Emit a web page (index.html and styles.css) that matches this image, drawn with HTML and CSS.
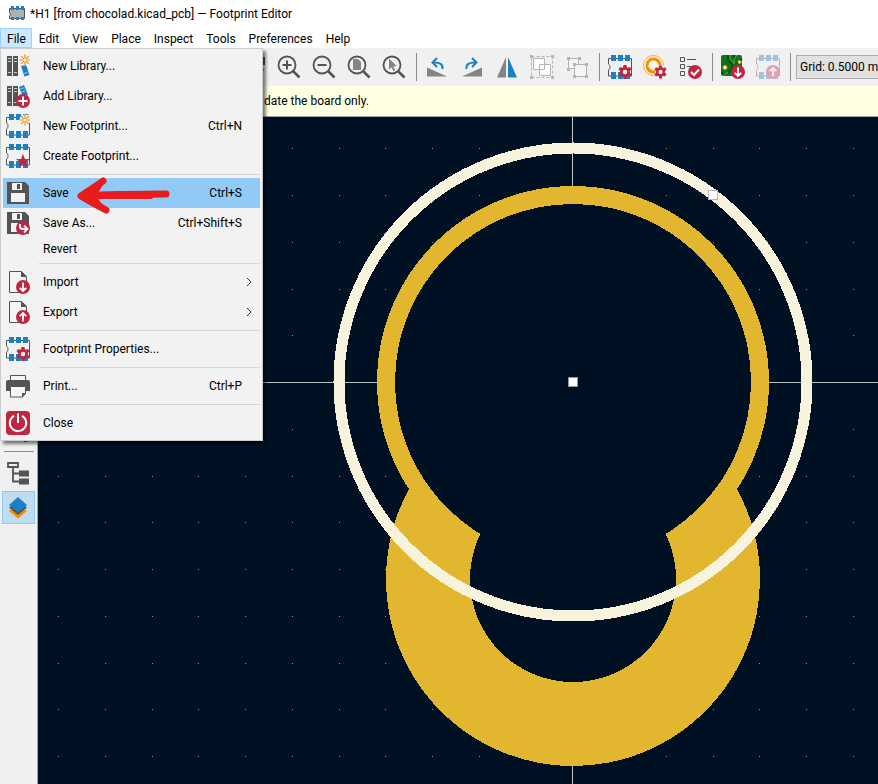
FILE: index.html
```html
<!DOCTYPE html>
<html lang="en">
<head>
<meta charset="utf-8">
<title>Footprint Editor</title>
<link rel="stylesheet" href="styles.css">
</head>
<body>
<svg class="defs" aria-hidden="true">
  <defs>
    <symbol id="footprint" viewBox="0 0 24 24">
      <path d="M.5 3.500H23.500V21H.5V15C2.500 14.500 2.500 10 .5 9Z" fill="none" stroke="#545454"/>
      <path d="M3 0h5v6H3zM10 0h5v6h-5zM17 0h5v6h-5zM3 17h5v7H3zM10 17h5v7h-5zM17 17h5v7h-5z" fill="#1a81c4"/>
    </symbol>
    <symbol id="gear" viewBox="0 0 14 14">
      <path d="M5.500 0h3l.4 2.200 1 .5 2.100-.8 1.500 2.600-1.700 1.400v1.800l1.700 1.500-1.500 2.600-2.100-.8-1 .6-.4 2.400h-3l-.4-2.400-1-.6-2.100.8L.5 9.200l1.700-1.500V5.900L.5 4.500 2 1.900l2.100.8 1-.5z" fill="#bf2641"/>
      <circle cx="7" cy="7" r="2.300" fill="#f0f0f0"/>
    </symbol>
    <symbol id="spark" viewBox="0 0 12 12">
      <circle cx="6" cy="6" r="5.500" fill="#f2f2f2"/>
      <path d="M6 .5v11M.5 6h11M2.200 2.200l7.600 7.600M9.800 2.200L2.200 9.800" stroke="#f29100" stroke-width="1.200"/>
      <circle cx="6" cy="6" r="1.500" fill="#fff"/>
    </symbol>
    <symbol id="books" viewBox="0 0 24 24">
      <path d="M1 2h5v20H1zM7 2h5v20H7z" fill="#545454"/>
      <path d="M2 4.500h3M2 7.500h3M2 18.500h3M8 4.500h3M8 7.500h3M8 18.500h3" stroke="#c9c9c9"/>
    </symbol>
    <symbol id="badge-down" viewBox="0 0 14 14">
      <circle cx="7" cy="7" r="7" fill="#bf2641"/>
      <path d="M7 2.500v8.500M3.700 7.800L7 11l3.300-3.200" fill="none" stroke="#fff" stroke-width="1.800"/>
    </symbol>
    <symbol id="badge-up" viewBox="0 0 14 14">
      <circle cx="7" cy="7" r="7" fill="#bf2641"/>
      <path d="M7 11.500V3M3.700 6.200L7 3l3.300 3.200" fill="none" stroke="#fff" stroke-width="1.800"/>
    </symbol>
    <symbol id="floppy" viewBox="0 0 24 24">
      <path d="M1 1h18l4 4v18H1z" fill="#545454"/>
      <path d="M6 2h10v7H6zM5 12h14v9H5z" fill="#f2f2f2"/>
      <path d="M11 3h3v5h-3z" fill="#545454"/>
    </symbol>
    <symbol id="page" viewBox="0 0 24 24">
      <path d="M3.500 1.500h12l5 5v16h-17z" fill="#f5f5f5" stroke="#545454"/>
      <path d="M15 1l6 6h-6z" fill="#545454"/>
    </symbol>
    <symbol id="lens" viewBox="0 0 24 24">
      <circle cx="10" cy="10" r="8.500" fill="none" stroke="#545454" stroke-width="1.800"/>
      <path d="M16 16l6.500 6.500" stroke="#545454" stroke-width="2.500"/>
    </symbol>
  </defs>
</svg>

<div class="app">
  <header class="titlebar">
    <svg class="app-icon" viewBox="0 0 16 16" aria-hidden="true">
      <path d="M.5 2.500h15v10H.5V10c1-.5 1-3 0-3.500z" fill="#a9b1b7" stroke="#545454"/>
      <path d="M2 0h3v4H2zM7 0h3v4H7zM12 0h3v4h-3zM2 11h3v3H2zM7 11h3v3H7zM12 11h3v3h-3z" fill="#1a81c4"/>
    </svg>
    <h1 class="title">*H1 [from chocolad.kicad_pcb] — Footprint Editor</h1>
  </header>

  <nav class="menubar">
    <button class="menubar-item open">File</button>
    <button class="menubar-item">Edit</button>
    <button class="menubar-item">View</button>
    <button class="menubar-item">Place</button>
    <button class="menubar-item">Inspect</button>
    <button class="menubar-item">Tools</button>
    <button class="menubar-item">Preferences</button>
    <button class="menubar-item">Help</button>

    <div class="menu" role="menu">
      <button class="item" role="menuitem">
        <svg class="icon" viewBox="0 0 24 24"><use href="#books"/><path d="M15 12l5-1.500 3.500 10.500-5 1.500z" fill="#1a81c4"/><path d="M18 19.500l3.500-1" stroke="#9cc9e8"/><use href="#spark" x="13" y="0" width="12" height="12"/></svg>
        <span class="label">New Library...</span>
      </button>
      <button class="item" role="menuitem">
        <svg class="icon" viewBox="0 0 24 24"><use href="#books"/><path d="M13 3l5-2 4 10-5 2z" fill="#1a81c4"/><path d="M14.500 5l3.500-1.200M15.500 8l3.500-1.200" stroke="#9cc9e8"/><circle cx="17" cy="17" r="7" fill="#bf2641"/><path d="M17 12.500v9M12.500 17h9" stroke="#fff" stroke-width="2"/></svg>
        <span class="label">Add Library...</span>
      </button>
      <button class="item" role="menuitem">
        <svg class="icon" viewBox="0 0 24 24"><use href="#footprint"/><use href="#spark" x="13" y="0" width="12" height="12"/></svg>
        <span class="label">New Footprint...</span><kbd class="keys">Ctrl+N</kbd>
      </button>
      <button class="item" role="menuitem">
        <svg class="icon" viewBox="0 0 24 24"><use href="#footprint"/><path d="M17 10l1.900 5H24l-4.100 3.200 1.500 5.300L17 20.400l-4.400 3.100 1.500-5.300L10 15h5.100z" fill="#bf2641"/></svg>
        <span class="label">Create Footprint...</span>
      </button>
      <hr class="rule">
      <button class="item selected" role="menuitem">
        <svg class="icon"><use href="#floppy"/></svg>
        <span class="label">Save</span><kbd class="keys">Ctrl+S</kbd>
      </button>
      <button class="item" role="menuitem">
        <svg class="icon" viewBox="0 0 24 24"><use href="#floppy"/><circle cx="17" cy="17" r="7" fill="#bf2641"/><path d="M14 13v2.500q0 2.500 3 2.500h4M18 14.500l3.500 3.500-3.500 3.500" fill="none" stroke="#fff" stroke-width="1.800"/></svg>
        <span class="label">Save As...</span><kbd class="keys">Ctrl+Shift+S</kbd>
      </button>
      <button class="item plain" role="menuitem"><span class="icon"></span><span class="label">Revert</span></button>
      <hr class="rule">
      <button class="item" role="menuitem">
        <svg class="icon" viewBox="0 0 24 24"><use href="#page"/><use href="#badge-down" x="10" y="10" width="14" height="14"/></svg>
        <span class="label">Import</span>
        <svg class="chevron" viewBox="0 0 6 10"><path d="M1 1l4 4-4 4" fill="none" stroke="#333"/></svg>
      </button>
      <button class="item" role="menuitem">
        <svg class="icon" viewBox="0 0 24 24"><use href="#page"/><use href="#badge-up" x="10" y="10" width="14" height="14"/></svg>
        <span class="label">Export</span>
        <svg class="chevron" viewBox="0 0 6 10"><path d="M1 1l4 4-4 4" fill="none" stroke="#333"/></svg>
      </button>
      <hr class="rule">
      <button class="item" role="menuitem">
        <svg class="icon" viewBox="0 0 24 24"><use href="#footprint"/><use href="#gear" x="10" y="10" width="14" height="14"/></svg>
        <span class="label">Footprint Properties...</span>
      </button>
      <hr class="rule">
      <button class="item" role="menuitem">
        <svg class="icon" viewBox="0 0 24 24"><path d="M4.500 6V1.500h15V6" fill="#f5f5f5" stroke="#545454"/><path d="M2 6h20q2 0 2 2v9h-4v-5H4v5H0V8q0-2 2-2z" fill="#545454"/><path d="M4.500 12.500h15v7l-3 3.500h-12z" fill="#f5f5f5" stroke="#545454"/><path d="M20 19h-4v4.500z" fill="#545454"/></svg>
        <span class="label">Print...</span><kbd class="keys">Ctrl+P</kbd>
      </button>
      <hr class="rule">
      <button class="item" role="menuitem">
        <svg class="icon" viewBox="0 0 24 24"><rect width="24" height="24" rx="4" fill="#bf2641"/><path d="M8 4.800a8.200 8.200 0 1 0 8 0M12 2.500V12" fill="none" stroke="#fff" stroke-width="2"/></svg>
        <span class="label">Close</span>
      </button>
      <svg class="pointer" viewBox="0 0 96 40" aria-hidden="true">
        <path d="M27 6Q17 13 5 21Q15 27 30 35M6 21Q30 19 50 19.500L90 19" fill="none" stroke="#e81c1c" stroke-width="7" stroke-linecap="round" stroke-linejoin="round"/>
        <path d="M4 21L28 8 22 18H50L80 18 76 24 50 24H22L30 34Z" fill="#e81c1c"/>
      </svg>
    </div>
  </nav>

  <div class="toolbar">
    <button class="tool" aria-label="Refresh"><svg class="icon" viewBox="0 0 24 24"><path d="M20 7A9 9 0 1 0 21 14M22 2v7h-7" fill="none" stroke="#545454" stroke-width="2"/></svg></button>
    <button class="tool" aria-label="Zoom in"><svg class="icon" viewBox="0 0 24 24"><use href="#lens"/><path d="M10 5.500v9M5.500 10h9" stroke="#545454" stroke-width="2"/></svg></button>
    <button class="tool" aria-label="Zoom out"><svg class="icon" viewBox="0 0 24 24"><use href="#lens"/><path d="M5.500 10h9" stroke="#545454" stroke-width="2"/></svg></button>
    <button class="tool" aria-label="Zoom to fit"><svg class="icon" viewBox="0 0 24 24"><use href="#lens"/><path d="M6 4h5l3 3v8H6z" fill="#848484"/></svg></button>
    <button class="tool" aria-label="Zoom to selection"><svg class="icon" viewBox="0 0 24 24"><use href="#lens"/><path d="M7 3.500v11l2.500-2.300 2 4 1.800-.9-1.900-3.900 3.300-.3z" fill="#848484"/></svg></button>
    <span class="divider"></span>
    <button class="tool" aria-label="Rotate left"><svg class="icon" viewBox="0 0 24 24"><path d="M2 12.500L22 21.500H2z" fill="#848484"/><path d="M17.500 14Q18.500 7 8 7.500" fill="none" stroke="#1a81c4" stroke-width="2"/><path d="M12 3L7.500 7.500 12 12" fill="none" stroke="#1a81c4" stroke-width="2"/></svg></button>
    <button class="tool" aria-label="Rotate right"><svg class="icon" viewBox="0 0 24 24"><path d="M22 12.500L2 21.500h20z" fill="#848484"/><path d="M6.500 14Q5.500 7 16 7.500" fill="none" stroke="#1a81c4" stroke-width="2"/><path d="M12 3l4.500 4.500L12 12" fill="none" stroke="#1a81c4" stroke-width="2"/></svg></button>
    <button class="tool" aria-label="Mirror"><svg class="icon" viewBox="0 0 24 24"><path d="M11 2v20.500H2z" fill="#848484"/><path d="M13 2v20.500h9z" fill="#1a81c4"/></svg></button>
    <button class="tool" aria-label="Group" disabled><svg class="icon" viewBox="0 0 24 24"><path d="M1.500 1.500h21v21h-21z" fill="none" stroke="#b4b4b4" stroke-dasharray="3 2"/><path d="M3.500 3.500h11v11h-11zM9.500 9.500h11v11h-11z" fill="#fff" stroke="#b4b4b4"/><path d="M0 0h3v3H0zM21 0h3v3h-3zM0 21h3v3H0zM21 21h3v3h-3z" fill="#b4b4b4"/></svg></button>
    <button class="tool" aria-label="Ungroup" disabled><svg class="icon" viewBox="0 0 24 24"><path d="M3.500 3.500h10v10h-10z" fill="#f5f5f5" stroke="#b4b4b4"/><path d="M9.500 9.500h12v12h-12z" fill="#f5f5f5" stroke="#b4b4b4"/><path d="M2 2h3v3H2zM13 2h3v3h-3zM2 13h3v3H2zM8 8h3v3H8zM20 8h3v3h-3zM8 20h3v3H8zM20 20h3v3h-3z" fill="#b4b4b4"/></svg></button>
    <span class="divider"></span>
    <button class="tool" aria-label="Footprint properties"><svg class="icon" viewBox="0 0 24 24"><use href="#footprint"/><use href="#gear" x="10" y="10" width="14" height="14"/></svg></button>
    <button class="tool" aria-label="Pad properties"><svg class="icon" viewBox="0 0 24 24"><circle cx="10.500" cy="10.500" r="10" fill="none" stroke="#f2a93b"/><circle cx="10.500" cy="10.500" r="6.500" fill="#f5f5f5" stroke="#f29100" stroke-width="3"/><path d="M12 24v-9l4-5h8v14z" fill="#f0f0f0"/><use href="#gear" x="11" y="10" width="13" height="14"/></svg></button>
    <button class="tool" aria-label="Check footprint"><svg class="icon" viewBox="0 0 24 24"><path d="M2.500 2.500h4v4h-4zM2.500 9.500h4v4h-4zM2.500 16.500h4v4h-4z" fill="none" stroke="#545454"/><path d="M9 4.500h9M9 11.500h5" stroke="#545454"/><circle cx="17" cy="17" r="7" fill="#bf2641"/><path d="M13 17l3 3 5-5.500" fill="none" stroke="#fff" stroke-width="2"/></svg></button>
    <span class="divider"></span>
    <button class="tool" aria-label="Load from board"><svg class="icon" viewBox="0 0 24 24"><rect y="0" width="21" height="21" rx="2" fill="#12721b"/><path d="M7 0v5l4 4v5l-4 4M13 0v5M21 4l-6 5M0 17l4 3" fill="none" stroke="#0a4a11" stroke-width="1.500"/><path d="M2 21l5-4M16 0l-3 4v5M9 0v4l4 4" stroke="#5db054" fill="none"/><circle cx="4" cy="12.500" r="2" fill="#fff" stroke="#f29100"/><circle cx="18.500" cy="7" r="1.500" fill="#fff" stroke="#f29100"/><use href="#badge-down" x="10" y="10" width="14" height="14"/></svg></button>
    <button class="tool faded" aria-label="Insert on board" disabled><svg class="icon" viewBox="0 0 24 24"><use href="#footprint"/><use href="#badge-up" x="10" y="10" width="14" height="14"/></svg></button>
    <span class="divider"></span>
    <select class="grid-select" aria-label="Grid"><option>Grid: 0.5000 mm</option></select>
  </div>

  <div class="infobar">date the board only.</div>

  <main class="workspace">
    <aside class="sidebar">
      <button class="side" aria-label="High contrast"><svg class="icon" viewBox="0 0 24 24"><path d="M3 3h12v12H3zM18 18h3v4h-3z" fill="#545454"/></svg></button>
      <hr class="side-rule">
      <button class="side" aria-label="Footprint tree"><svg class="icon" viewBox="0 0 24 24"><path d="M2 2h10v4H2zM7 7v13.500h7M7 12.500h7" fill="none" stroke="#545454" stroke-width="1.800"/><path d="M13 9.500h10v6H13zM13 17.500h10v6H13z" fill="#545454"/></svg></button>
      <button class="side active" aria-label="Layers"><svg class="icon" viewBox="0 0 24 24"><path d="M3 15l9 7.500 9-7.500-3-2H6z" fill="#f29100"/><path d="M3 11.500l9 7.500 9-7.500-3-2H6z" fill="#545454"/><path d="M12 1l9 8-9 7.500L3 9z" fill="#1a81c4"/></svg></button>
    </aside>
    <div class="canvas">
      <svg class="drawing" role="img" aria-label="Mounting hole footprint">
        <defs>
          <pattern id="dots" x="20" y="31" width="187" height="187" patternUnits="userSpaceOnUse">
            <path d="M0 0h1v1H0zM47 0h1v1h-1zM94 0h1v1h-1zM140 0h1v1h-1zM0 47h1v1H0zM47 47h1v1h-1zM94 47h1v1h-1zM140 47h1v1h-1zM0 94h1v1H0zM47 94h1v1h-1zM94 94h1v1h-1zM140 94h1v1h-1zM0 141h1v1H0zM47 141h1v1h-1zM94 141h1v1h-1zM140 141h1v1h-1z" fill="#8d9298"/>
          </pattern>
        </defs>
        <rect width="100%" height="100%" fill="url(#dots)"/>
        <g shape-rendering="crispEdges">
          <rect x="534" y="0" width="1" height="100%" fill="#c2c6c9"/>
          <rect x="0" y="265" width="100%" height="1" fill="#b4bfbf"/>
          <circle cx="535" cy="265" r="196" fill="#e2b62f"/>
          <circle cx="535" cy="462" r="187" fill="#e2b62f"/>
          <circle cx="535" cy="265" r="178" fill="#001023"/>
          <circle cx="535" cy="462" r="103" fill="#001023"/>
          <circle cx="535" cy="265" r="234" fill="none" stroke="#f8f3dd" stroke-width="11"/>
          <rect x="530" y="260" width="10" height="10" fill="#8d949c"/>
          <rect x="531" y="261" width="8" height="8" fill="#fff"/>
          <rect x="670" y="73" width="10" height="10" fill="#bcbcc0"/>
          <rect x="671" y="74" width="8" height="8" fill="#fff"/>
        </g>
      </svg>
    </div>
  </main>
</div>
</body>
</html>
```

FILE: styles.css
```css
* { box-sizing: border-box; }

body {
  margin: 0;
  font: 12px/16px Roboto, "Open Sans", sans-serif;
  color: #000;
  background: #f0f0f0;
}

button {
  font: inherit;
  color: inherit;
  background: none;
  border: 0;
  padding: 0;
}

.defs { position: absolute; width: 0; height: 0; }

.app {
  display: flex;
  flex-direction: column;
  height: 100vh;
  overflow: hidden;
}

.icon { width: 24px; height: 24px; flex: none; display: block; }

.titlebar {
  display: flex;
  align-items: center;
  gap: 5px;
  height: 28px;
  padding-left: 9px;
  background: #fff;
  flex: none;
}
.app-icon { width: 16px; height: 16px; }
.title { margin: 0; font-size: 12px; font-weight: 400; }

.menubar {
  position: relative;
  z-index: 2;
  display: flex;
  height: 20px;
  background: #fff;
  flex: none;
}
.menubar-item { padding: 1px 5px 0 6px; border: 1px solid transparent; }
.menubar-item.open { background: #cce8ff; border-color: #99d1ff; }

.menu {
  position: absolute;
  top: 20px;
  left: 0;
  width: 263px;
  padding: 2px;
  background: #f2f2f2;
  border: 1px solid #ccc;
  box-shadow: 3px 3px 3px rgba(0, 0, 0, 0.5);
}
.item {
  display: flex;
  align-items: center;
  width: 100%;
  height: 30px;
  padding: 0 8px 0 3px;
  text-align: left;
}
.item.plain { height: 22px; }
.item.selected { background: #91c9f7; }
.label { flex: 1; padding-left: 13px; }
.keys { font: inherit; padding-right: 10px; }
.chevron { width: 6px; height: 10px; }
.rule {
  height: 1px;
  margin: 3px 0 3px 36px;
  border: 0;
  background: #d7d7d7;
}
.pointer {
  position: absolute;
  left: 75px;
  top: 126px;
  width: 96px;
  height: 40px;
}

.toolbar {
  display: flex;
  align-items: center;
  height: 38px;
  padding-left: 236px;
  background: #f0f0f0;
  flex: none;
}
.tool { width: 35px; padding: 0 5px 0 6px; flex: none; }
.faded { opacity: 0.38; }
.divider {
  width: 1px;
  height: 28px;
  margin: 0 2px 0 5px;
  background: #8c8c8c;
  flex: none;
}
.grid-select {
  width: 200px;
  height: 24px;
  margin-left: 3px;
  padding: 0 3px;
  font: inherit;
  color: #000;
  background: #e1e1e1;
  border: 1px solid #adadad;
  border-radius: 0;
  appearance: none;
  flex: none;
}

.infobar {
  height: 31px;
  padding: 7px 0 7px 264px;
  background: #ffffe1;
  border-bottom: 1px solid #a0a0a0;
  flex: none;
}

.workspace { display: flex; flex: 1; min-height: 0; }
.sidebar {
  width: 38px;
  padding: 298px 2px 0;
  border-right: 1px solid #a0a0a0;
  flex: none;
}
.side {
  display: flex;
  align-items: center;
  width: 33px;
  height: 33px;
  padding-left: 3px;
  margin-bottom: 2px;
  border: 1px solid transparent;
}
.side.active { background: #c0dcf3; border-color: #90c8f6; }
.side-rule {
  height: 1px;
  margin: 3px 1px 4px 2px;
  border: 0;
  background: #8c8c8c;
}

.canvas { flex: 1; min-width: 0; overflow: hidden; background: #001023; }
.drawing { display: block; width: 100%; height: 100%; }
```
